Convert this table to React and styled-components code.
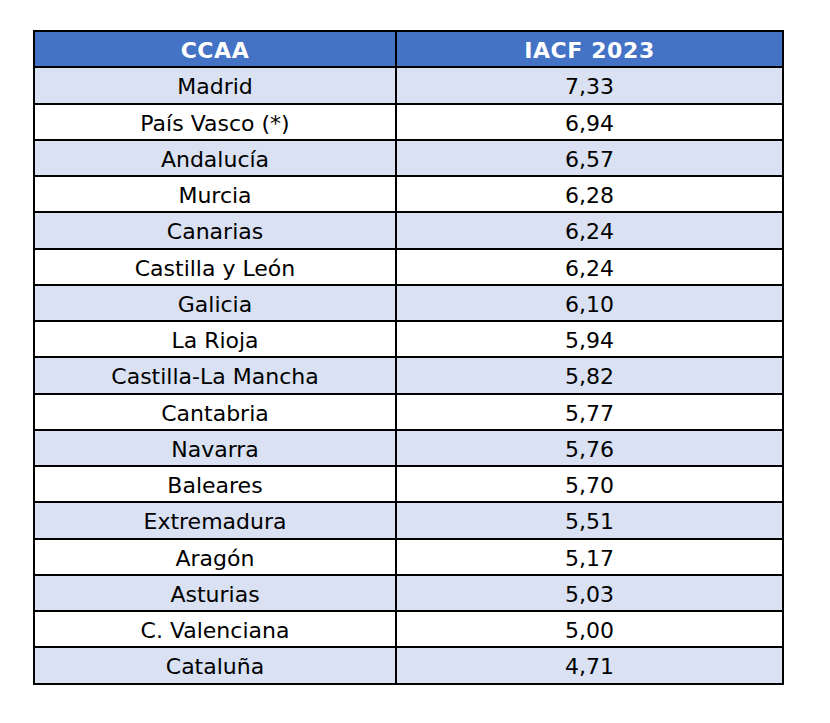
import React from "react";
import styled, { createGlobalStyle } from "styled-components";

const Global = createGlobalStyle`
  html, body { margin: 0; padding: 0; background: #ffffff; }
  body { font-family: "DejaVu Sans", Verdana, sans-serif; }
`;

const Page = styled.div`
  padding: 30px 0 0 33px;
`;

const Table = styled.table`
  border-collapse: collapse;
  border: 2px solid #000;
  table-layout: fixed;
  width: 751px;
  font-family: "DejaVu Sans", Verdana, sans-serif;
`;

const Th = styled.th`
  background: #4472c4;
  color: #ffffff;
  font-weight: bold;
  font-size: 22px;
  letter-spacing: 0.6px;
  height: 30.25px;
  padding: 4px 0 0;
  border: 2px solid #000;
  text-align: center;
  vertical-align: middle;
  line-height: 1;
`;

const Td = styled.td`
  background: ${(p) => (p.$alt ? "#d9e1f2" : "#ffffff")};
  color: #000;
  font-size: 22px;
  height: 30.25px;
  padding: 4px 0 0;
  border: 2px solid #000;
  text-align: center;
  vertical-align: middle;
  line-height: 1;
`;

const rows = [
  ["Madrid", "7,33"],
  ["País Vasco (*)", "6,94"],
  ["Andalucía", "6,57"],
  ["Murcia", "6,28"],
  ["Canarias", "6,24"],
  ["Castilla y León", "6,24"],
  ["Galicia", "6,10"],
  ["La Rioja", "5,94"],
  ["Castilla-La Mancha", "5,82"],
  ["Cantabria", "5,77"],
  ["Navarra", "5,76"],
  ["Baleares", "5,70"],
  ["Extremadura", "5,51"],
  ["Aragón", "5,17"],
  ["Asturias", "5,03"],
  ["C. Valenciana", "5,00"],
  ["Cataluña", "4,71"],
];

export default function App() {
  return (
    <>
      <Global />
      <Page>
        <Table>
          <colgroup>
            <col style={{ width: "362px" }} />
            <col style={{ width: "387px" }} />
          </colgroup>
          <thead>
            <tr>
              <Th>CCAA</Th>
              <Th>IACF 2023</Th>
            </tr>
          </thead>
          <tbody>
            {rows.map(([name, val], i) => (
              <tr key={name}>
                <Td $alt={i % 2 === 0}>{name}</Td>
                <Td $alt={i % 2 === 0}>{val}</Td>
              </tr>
            ))}
          </tbody>
        </Table>
      </Page>
    </>
  );
}
